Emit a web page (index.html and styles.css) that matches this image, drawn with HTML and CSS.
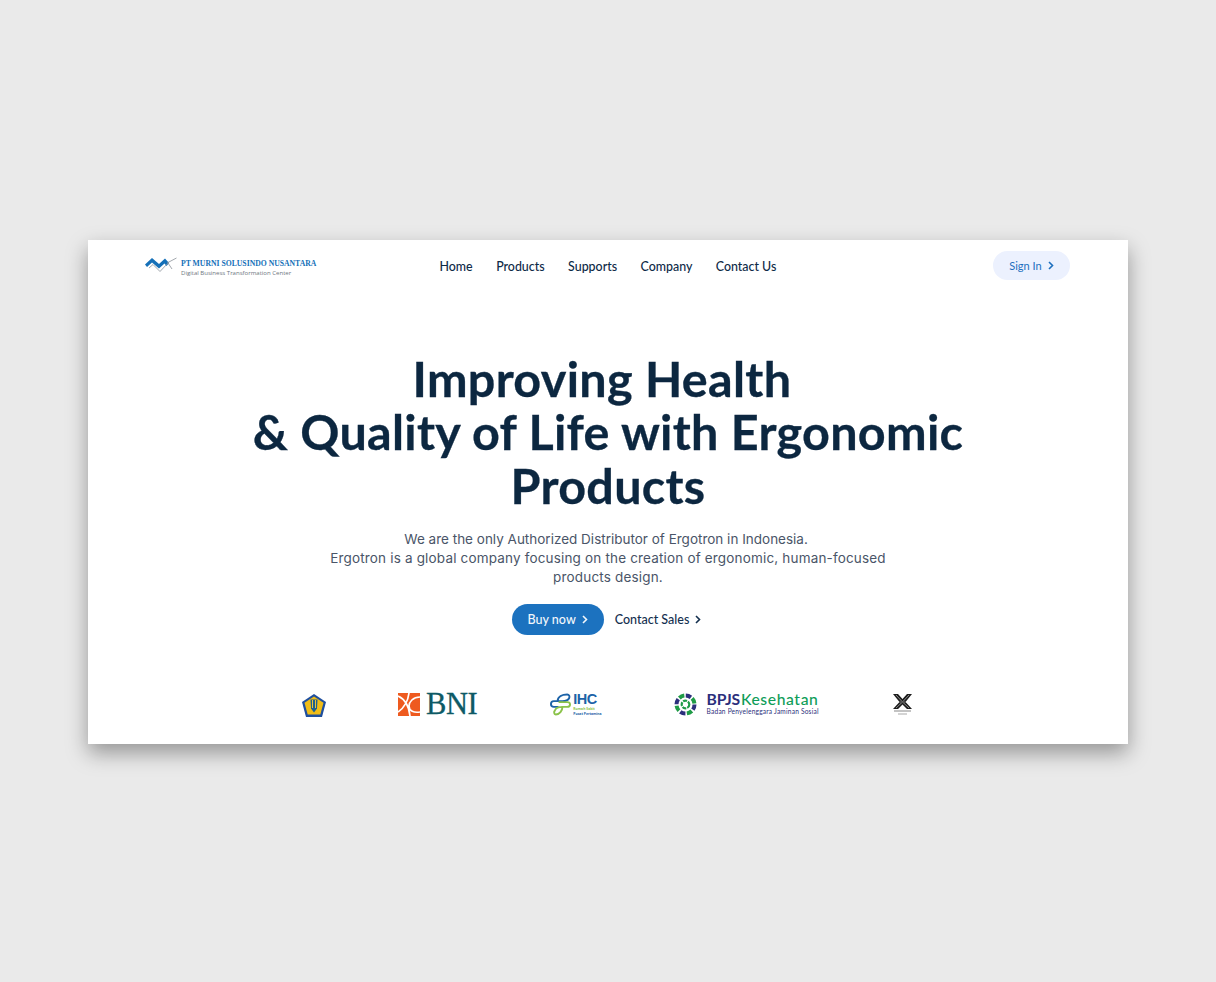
FILE: index.html
```html
<!DOCTYPE html>
<html lang="en">
<head>
<meta charset="utf-8">
<title>PT Murni Solusindo Nusantara</title>
<link rel="stylesheet" href="styles.css">
</head>
<body>
<main class="card">
  <header class="nav">
    <a class="brand">
      <svg class="brand-mark" width="32" height="16" viewBox="0 0 32 16">
        <path d="M0 7.500 L7 1 L14 7 L20 1.500 L24 6 L21.500 9 L19.500 6.500 L14 11.500 L7 5.500 L2 10 Z" fill="#1570b8"/>
        <path d="M4 11 L8 7.500 L15 14.500 L23 6 L27 12 M22 6 L31.500 1" fill="none" stroke="#8b9299" stroke-width=".8"/>
      </svg>
      <span class="brand-text">
        <span class="brand-name">PT MURNI SOLUSINDO NUSANTARA</span>
        <span class="brand-sub">Digital Business Transformation Center</span>
      </span>
    </a>
    <nav class="links">
      <a>Home</a><a>Products</a><a>Supports</a><a>Company</a><a>Contact Us</a>
    </nav>
    <a class="signin">Sign In
      <svg class="chev" width="6" height="9" viewBox="0 0 6 9"><path d="M1 1 L4.500 4.500 L1 8" fill="none" stroke="currentColor" stroke-width="1.600"/></svg>
    </a>
  </header>

  <section class="hero">
    <h1>Improving Health&nbsp;<br>&amp; Quality of Life with Ergonomic<br>Products</h1>
    <p><span class="lead">We are the only Authorized Distributor of Ergotron in Indonesia.&nbsp;</span><br>Ergotron is a global company focusing on the creation of ergonomic, human-focused<br>products design.</p>
    <div class="actions">
      <a class="buy">Buy now
        <svg class="chev" width="6" height="9" viewBox="0 0 6 9"><path d="M1 1 L4.500 4.500 L1 8" fill="none" stroke="currentColor" stroke-width="1.600"/></svg>
      </a>
      <a class="sales">Contact Sales
        <svg class="chev" width="6" height="9" viewBox="0 0 6 9"><path d="M1 1 L4.500 4.500 L1 8" fill="none" stroke="currentColor" stroke-width="1.600"/></svg>
      </a>
    </div>
  </section>

  <section class="logos">
    <svg class="logo-kemenkeu" width="24" height="23" viewBox="0 0 24 23">
      <path d="M12 0 L24 8 L20 23 L4 23 L0 8 Z" fill="#1f4f9e"/>
      <path d="M12 2.500 L21.500 8.800 L18.300 20.500 L5.700 20.500 L2.500 8.800 Z" fill="#f0bd17"/>
      <path d="M8.500 5.500 H15.500 L15 14.500 L12 18.500 L9 14.500 Z" fill="#1f5f8c"/>
      <path d="M10.500 6 V14 M13.500 6 V14" stroke="#e8c53a" stroke-width="1"/>
    </svg>
    <div class="logo-bni">
      <svg width="22" height="23" viewBox="0 0 22 23">
        <rect width="22" height="23" fill="#ee5a1f"/>
        <path d="M0 3 C7 6 11 14 12 23 M11 0 C10 8 6 15 0 19 M22 4 C15 4 11 9 11 13 C11 18 16 20 22 19" fill="none" stroke="#fff" stroke-width="1.700"/>
      </svg>
      <span class="bni-text">BNI</span>
    </div>
    <div class="logo-ihc">
      <svg width="21" height="23" viewBox="0 0 22 23">
        <path d="M13 8 H4 C0 8 0 14 4 14 H9 M8 8 C8 3 13 1 18 1 C20 1 21 3 20 5 C19 7 16 8 13 8" fill="none" stroke="#1d63a8" stroke-width="2"/>
        <path d="M9 9 H18 C22 9 22 14 18 14 H13 C13 18 10 22 6 22 C4 22 4 19 5 18 C6 15 9 14 13 14" fill="none" stroke="#8bc34a" stroke-width="2"/>
      </svg>
      <div class="ihc-text">
        <span class="ihc-name">IHC</span>
        <span class="ihc-green">Rumah Sakit</span>
        <span class="ihc-blue">Pusat Pertamina</span>
      </div>
    </div>
    <div class="logo-bpjs">
      <svg width="23" height="23" viewBox="0 0 23 23">
        <circle cx="11.500" cy="11.500" r="9" fill="none" stroke="#2c2f7c" stroke-width="4" stroke-dasharray="5.500 8.640"/>
        <circle cx="11.500" cy="11.500" r="9" fill="none" stroke="#1f9b46" stroke-width="4" stroke-dasharray="5.500 8.640" stroke-dashoffset="7"/>
        <circle cx="11.500" cy="11.500" r="3.800" fill="none" stroke="#1f9b46" stroke-width="2.200" stroke-dasharray="4 1"/>
      </svg>
      <div class="bpjs-text">
        <div class="bpjs-top"><span class="bpjs-a">BPJS</span><span class="bpjs-b">Kesehatan</span></div>
        <div class="bpjs-sub">Badan Penyelenggara Jaminan Sosial</div>
      </div>
    </div>
    <svg class="logo-x" width="19" height="21" viewBox="0 0 19 21">
      <path d="M0 0 H5 L9.500 5 L14 0 H19 L12.500 8 L19 15 H14 L9.500 10.500 L5 15 H0 L6.500 8 Z" fill="#1c1c1c"/>
      <path d="M3 1 L9.500 8 M16 1 L9.500 8 M3 14 L9.500 8 M16 14 L9.500 8" stroke="#bbb" stroke-width=".7" fill="none"/>
      <rect x="6" y="7.300" width="7" height="1.500" fill="#555"/>
      <rect x="1" y="16.500" width="17" height="1" fill="#888"/>
      <rect x="5" y="19.500" width="9" height="1" fill="#aaa"/>
    </svg>
  </section>
</main>
</body>
</html>
```
FILE: styles.css
```css
* { box-sizing: border-box; }
html, body { margin: 0; height: 100%; }
body {
  background: #eaeaea;
  padding: 240px 88px 0;
  font-family: "Open Sans", "Liberation Sans", sans-serif;
  overflow: hidden;
}
.card {
  width: 1040px;
  height: 504px;
  background: #fff;
  box-shadow: 0 9px 20px rgba(0, 0, 0, .36);
  display: flex;
  flex-direction: column;
}
.nav {
  display: flex;
  align-items: center;
  height: 51px;
  padding: 0 58px 0 57px;
}
.brand { display: flex; align-items: center; gap: 4px; width: 172px; flex: none; }
.brand-mark { flex: none; margin-top: -2px; }
.brand-text { display: flex; flex-direction: column; margin-top: 5px; }
.brand-name {
  font-family: "Liberation Serif", serif;
  font-weight: 700;
  font-size: 7.700px;
  line-height: 10px;
  color: #1570b8;
  white-space: nowrap;
}
.brand-sub {
  font-size: 6.050px;
  line-height: 8px;
  color: #6d7680;
  white-space: nowrap;
}
.links {
  display: flex;
  gap: 23.500px;
  font-family: "Lato", sans-serif;
  font-size: 12.400px;
  font-weight: 500;
  color: #0e2a47;
  margin-left: 122.500px;
  padding-top: 1px;
}
.signin {
  width: 77px;
  height: 29px;
  margin-left: auto;
  border-radius: 15px;
  background: #ecf1fe;
  color: #1d6fbe;
  font-family: "Lato", sans-serif;
  font-size: 11px;
  display: flex;
  align-items: center;
  justify-content: center;
  gap: 6px;
}
.hero {
  flex: 1;
  display: flex;
  flex-direction: column;
  align-items: center;
  padding-top: 61px;
}
h1 {
  margin: 0;
  width: 760px;
  text-align: center;
  font-family: "Lato", sans-serif;
  font-weight: 700;
  font-size: 48.500px;
  letter-spacing: .3px;
  line-height: 53.300px;
  color: #0c2740;
  -webkit-text-stroke: .3px #0c2740;
}
.hero p {
  margin: 18px 0 0;
  text-align: center;
  font-family: "Inter", "Open Sans", sans-serif;
  font-size: 13.500px;
  letter-spacing: .17px;
  line-height: 19px;
  color: #4a5568;
}
.lead { letter-spacing: 0; }
.actions {
  display: flex;
  align-items: center;
  gap: 11px;
  margin-top: 17px;
  padding-right: 3px;
  font-family: "Lato", sans-serif;
  font-size: 12.500px;
  font-weight: 500;
}
.buy {
  width: 92px;
  height: 31px;
  border-radius: 16px;
  background: #1c72bf;
  color: #f2f7fc;
  display: flex;
  align-items: center;
  justify-content: center;
  gap: 6px;
}
.sales { display: flex; align-items: center; gap: 6px; color: #14304f; }
.logos {
  height: 62px;
  display: flex;
  align-items: center;
  padding-left: 214px;
  padding-bottom: 18px;
}
.logo-kemenkeu { flex: none; margin-right: 72px; margin-top: 2px; }
.logo-bni { display: flex; align-items: center; gap: 6px; margin-right: 73px; }
.bni-text {
  font-family: "Liberation Serif", serif;
  font-size: 30.500px;
  line-height: 26px;
  color: #0e5a66;
  letter-spacing: -.4px;
  -webkit-text-stroke: .3px #0e5a66;
}
.logo-ihc { display: flex; align-items: center; gap: 2px; margin-right: 72px; }
.ihc-text { display: flex; flex-direction: column; }
.ihc-name {
  font-family: "Liberation Sans", sans-serif;
  font-weight: 700;
  font-size: 14.500px;
  line-height: 13px;
  letter-spacing: -.5px;
  color: #1d63a8;
}
.ihc-green, .ihc-blue { font-size: 3.400px; line-height: 5px; font-weight: 700; white-space: nowrap; }
.ihc-green { color: #8bc34a; }
.ihc-blue { color: #1d63a8; }
.logo-bpjs { display: flex; align-items: center; gap: 10px; margin-right: 74px; }
.bpjs-text { display: flex; flex-direction: column; }
.bpjs-top {
  font-family: "Lato", sans-serif;
  line-height: 14px;
  white-space: nowrap;
}
.bpjs-a { font-size: 15.700px; font-weight: 700; color: #2c2f7c; letter-spacing: -.2px; margin-right: 1px; }
.bpjs-b { font-size: 15.700px; font-weight: 500; color: #0f9d58; letter-spacing: .6px; }
.bpjs-sub {
  font-family: "Lato", sans-serif;
  font-size: 6.600px;
  line-height: 9px;
  margin-top: 1.500px;
  letter-spacing: .2px;
  color: #2c2f7c;
  white-space: nowrap;
}
.logo-x { flex: none; }
```
